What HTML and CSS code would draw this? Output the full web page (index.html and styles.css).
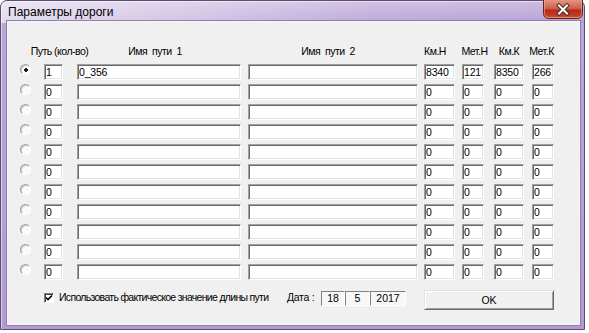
FILE: index.html
```html
<!DOCTYPE html>
<html lang="ru">
<head>
  <meta charset="UTF-8" />
  <meta name="viewport" content="width=device-width, initial-scale=1.0" />
  <title>Параметры дороги</title>
  <link rel="stylesheet" href="styles.css">
</head>
<body>

  <div class="window">
    <div class="titlebar">
      <span class="title">Параметры дороги</span>
      <span class="close" role="button" aria-label="Закрыть">
        <svg width="40" height="19" viewBox="0 0 40 19">
          <defs>
            <linearGradient id="closeFill" x1="0" y1="0" x2="0" y2="1">
              <stop offset="0" stop-color="#e39583"/>
              <stop offset="0.45" stop-color="#d0614a"/>
              <stop offset="0.55" stop-color="#b42c15"/>
              <stop offset="0.85" stop-color="#c23c24"/>
              <stop offset="1" stop-color="#d86a4f"/>
            </linearGradient>
          </defs>
          <path d="M0.5 0 V13.5 A5 5 0 0 0 5.5 18.5 H34.5 A5 5 0 0 0 39.5 13.5 V0" fill="url(#closeFill)" stroke="#5a2a22"/>
          <path d="M1.5 0 V13.5 A4 4 0 0 0 5.5 17.5 H34.5 A4 4 0 0 0 38.5 13.5 V0" fill="none" stroke="#f2b8a8" stroke-opacity="0.5"/>
          <path d="M16 5.5 L24 13.5 M24 5.5 L16 13.5" stroke="#4a2a26" stroke-width="4" stroke-linecap="square" fill="none"/>
          <path d="M16 5.5 L24 13.5 M24 5.5 L16 13.5" stroke="#fff" stroke-width="2" stroke-linecap="square" fill="none"/>
        </svg>
      </span>
    </div>

    <form class="client" id="roadForm" onsubmit="event.preventDefault();">
      <div class="heads">
        <span class="head h1">Путь (кол-во)</span>
        <span class="head h2">Имя&nbsp; пути&nbsp; 1</span>
        <span class="head h3">Имя&nbsp; пути&nbsp; 2</span>
        <span class="head h4">Км.Н</span>
        <span class="head h5">Мет.Н</span>
        <span class="head h6">Км.К</span>
        <span class="head h7">Мет.К</span>
      </div>

      <div class="rows" id="rows"></div>

      <div class="footer">
        <label class="check">
          <input type="checkbox" checked>
          <span>Использовать фактическое значение длины пути</span>
        </label>
        <span class="dateLabel">Дата :</span>
        <span class="dateBox day">18</span>
        <span class="dateBox month">5</span>
        <span class="dateBox year">2017</span>
        <input type="submit" class="okButton" value="OK">
      </div>
    </form>
  </div>

  <script>
    const paths = [
      { count: "1", name1: "0_356", name2: "", kmH: "8340", metH: "121", kmK: "8350", metK: "266" }
    ];
    while (paths.length < 11) {
      paths.push({ count: "0", name1: "", name2: "", kmH: "0", metH: "0", kmK: "0", metK: "0" });
    }

    const rows = document.getElementById("rows");
    paths.forEach(function (p, i) {
      const row = document.createElement("div");
      row.className = "row";
      row.innerHTML =
        `<span class="cell"><input type="radio" name="path" class="radio"${i === 0 ? " checked" : ""}></span>` +
        `<span class="cell"><input type="text" class="field count" value="${p.count}"></span>` +
        `<span class="cell"><input type="text" class="field name1" value="${p.name1}"></span>` +
        `<span class="cell"><input type="text" class="field name2" value="${p.name2}"></span>` +
        `<span class="cell"><input type="text" class="field kmH" value="${p.kmH}"></span>` +
        `<span class="cell"><input type="text" class="field metH" value="${p.metH}"></span>` +
        `<span class="cell"><input type="text" class="field kmK" value="${p.kmK}"></span>` +
        `<span class="cell"><input type="text" class="field metK" value="${p.metK}"></span>`;
      rows.appendChild(row);
    });
  </script>

</body>
</html>
```

FILE: styles.css
```css
body {
  margin: 0;
  background-color: #ffffff;
  font-family: "Liberation Sans", Arial, sans-serif;
  font-size: 10.5px;
  color: #000;
}

.window {
  width: 585px;
  height: 330px;
  box-sizing: border-box;
  border: 1px solid #5b4c70;
  border-radius: 7px 7px 0 0;
  padding: 0 4px 4px 6px;
  display: flex;
  flex-direction: column;
  background:
    linear-gradient(to bottom, rgba(255,255,255,0.3), rgba(255,255,255,0) 21px),
    linear-gradient(to right, #e2dbee 0%, #d2c5e5 30%, #bda8d9 65%, #b7a0d6 100%) top / 100% 22px no-repeat,
    linear-gradient(to bottom, #bca6d9, #b39ad5);
  box-shadow: inset 1px 1px 0 rgba(255,255,255,0.5);
}

.titlebar {
  height: 20px;
  display: flex;
  align-items: flex-start;
}

.title {
  font-family: "Liberation Sans", Arial, sans-serif;
  font-size: 12px;
  line-height: 15px;
  padding-top: 4px;
  padding-left: 1px;
  color: #000;
}

.close {
  margin-left: auto;
  margin-top: -1px;
  margin-right: -3px;
  width: 40px;
  height: 19px;
  display: flex;
}

.client {
  flex: 1;
  margin: 0;
  background-color: #f0f0f0;
  border: 1px solid #f7f5fa;
  box-shadow: 0 0 0 1px #8f7daa;
  display: flex;
  flex-direction: column;
}

.heads {
  display: flex;
  margin-top: 22px;
  padding-left: 16px;
  height: 14px;
  line-height: 14px;
}

.head {
  display: flex;
  justify-content: center;
  white-space: nowrap;
  letter-spacing: -0.5px;
}

.h1 { width: 71px; }
.h2 { width: 90px; margin-left: 15px; }
.h3 { width: 90px; margin-left: 83px; }
.h4 { width: 30px; margin-left: 47px; }
.h5 { width: 35px; margin-left: 7px; }
.h6 { width: 30px; margin-left: 2px; }
.h7 { width: 31px; margin-left: 2px; }

.rows {
  margin-top: 6px;
  padding-left: 12px;
  display: flex;
  flex-direction: column;
  gap: 4px;
}

.row {
  display: grid;
  grid-template-columns: 24px 33px 171px 176px 38px 32px 38px 22px;
  height: 16px;
}

.cell {
  display: flex;
}

.field {
  box-sizing: border-box;
  height: 16px;
  margin: 0;
  padding: 0 1px;
  font-family: "Liberation Sans", Arial, sans-serif;
  font-size: 10.5px;
  letter-spacing: -0.2px;
  color: #000;
  background-color: #ffffff;
  border: 1px solid;
  border-color: #a0a0a0 #ffffff #ffffff #a0a0a0;
  box-shadow: inset 1px 1px 0 #696969, inset -1px -1px 0 #e3e3e3;
  outline: none;
}

.count { width: 19px; }
.name1 { width: 164px; }
.name2 { width: 170px; }
.kmH   { width: 31px; }
.metH  { width: 22px; }
.kmK   { width: 30px; }
.metK  { width: 22px; }

.radio {
  appearance: none;
  width: 11px;
  height: 11px;
  margin: 0;
  border-radius: 50%;
  border: 1px solid;
  border-color: #a0a0a0 #ffffff #ffffff #a0a0a0;
  box-shadow: inset 1px 1px 0 #c8c8c8;
  background-color: #fafafa;
  box-sizing: border-box;
}

.radio:checked {
  background: radial-gradient(circle at 5px 5px, #1a1a1a 0 1.6px, #fafafa 2.1px);
}

.footer {
  display: flex;
  align-items: flex-start;
  margin-top: 10px;
  height: 21px;
}

.check {
  display: flex;
  align-items: flex-start;
  width: 243px;
  margin-left: 36px;
  line-height: 14px;
  letter-spacing: -0.7px;
  white-space: nowrap;
}

.check input {
  appearance: none;
  flex-shrink: 0;
  width: 10px;
  height: 10px;
  margin: 3px 5px 0 0;
  box-sizing: border-box;
  border: 1px solid;
  border-color: #808080 #ffffff #ffffff #808080;
  box-shadow: inset 1px 1px 0 #404040;
  background-color: #ffffff;
}

.check input:checked {
  background: #fff url("data:image/svg+xml,%3Csvg xmlns='http://www.w3.org/2000/svg' width='8' height='8'%3E%3Cpath d='M1 3.5 L3 5.5 L7 1.5' stroke='%23000' stroke-width='1.6' fill='none'/%3E%3C/svg%3E") no-repeat center;
}

.dateLabel {
  width: 33px;
  flex-shrink: 0;
  line-height: 14px;
  white-space: nowrap;
  letter-spacing: -0.3px;
}

.dateBox {
  box-sizing: border-box;
  flex-shrink: 0;
  height: 15px;
  margin-top: 1px;
  line-height: 13px;
  text-align: center;
  background-color: #f7f7f7;
  border: 1px solid;
  border-color: #808080 #ffffff #ffffff #808080;
}

.day   { width: 24px; margin-left: 1px; }
.month { width: 25px; }
.year  { width: 36px; }

.okButton {
  width: 130px;
  height: 20px;
  margin: 0 0 0 18px;
  padding: 0;
  box-sizing: border-box;
  flex-shrink: 0;
  font-family: "Liberation Sans", Arial, sans-serif;
  font-size: 10.5px;
  color: #000;
  background-color: #f0f0f0;
  border: 1px solid;
  border-color: #e3e3e3 #696969 #696969 #e3e3e3;
  box-shadow: inset 1px 1px 0 #ffffff, inset -1px -1px 0 #a0a0a0;
}
```
